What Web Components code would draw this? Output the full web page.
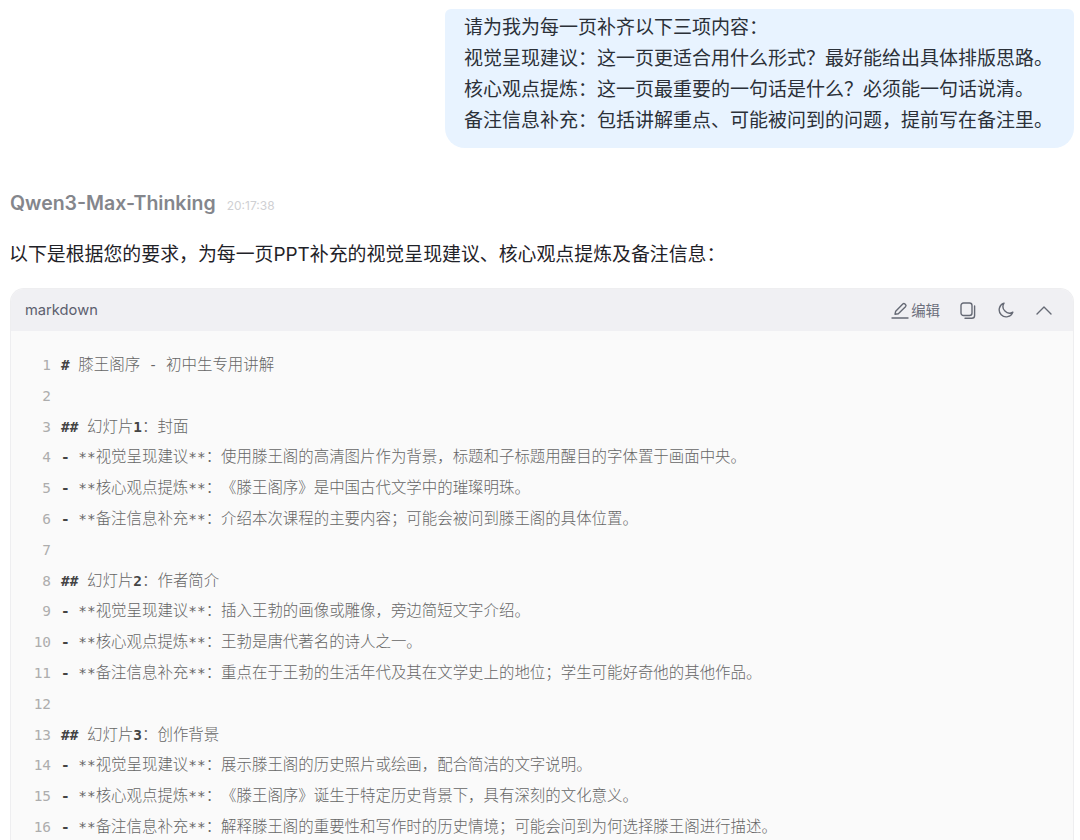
<!DOCTYPE html>
<html lang="zh">
<head>
<meta charset="utf-8">
<style>
html,body{margin:0;padding:0;background:#fff;height:840px;overflow:hidden}
body{font-family:"Inter","Noto Sans CJK SC",sans-serif}
</style>
</head>
<body>
<chat-page>
  <user-bubble>
    <div>请为我为每一页补齐以下三项内容：</div>
    <div>视觉呈现建议：这一页更适合用什么形式？最好能给出具体排版思路。</div>
    <div>核心观点提炼：这一页最重要的一句话是什么？必须能一句话说清。</div>
    <div>备注信息补充：包括讲解重点、可能被问到的问题，提前写在备注里。</div>
  </user-bubble>
  <model-meta name="Qwen3-Max-Thinking" time="20:17:38"></model-meta>
  <reply-text>以下是根据您的要求，为每一页PPT补充的视觉呈现建议、核心观点提炼及备注信息：</reply-text>
  <code-card lang="markdown">
    <code-line n="1" kind="h"># |膝王阁序 - 初中生专用讲解</code-line>
    <code-line n="2"></code-line>
    <code-line n="3" kind="h">## |幻灯片1：封面</code-line>
    <code-line n="4" kind="li">- |**视觉呈现建议**：使用滕王阁的高清图片作为背景，标题和子标题用醒目的字体置于画面中央。</code-line>
    <code-line n="5" kind="li">- |**核心观点提炼**：《滕王阁序》是中国古代文学中的璀璨明珠。</code-line>
    <code-line n="6" kind="li">- |**备注信息补充**：介绍本次课程的主要内容；可能会被问到滕王阁的具体位置。</code-line>
    <code-line n="7"></code-line>
    <code-line n="8" kind="h">## |幻灯片2：作者简介</code-line>
    <code-line n="9" kind="li">- |**视觉呈现建议**：插入王勃的画像或雕像，旁边简短文字介绍。</code-line>
    <code-line n="10" kind="li">- |**核心观点提炼**：王勃是唐代著名的诗人之一。</code-line>
    <code-line n="11" kind="li">- |**备注信息补充**：重点在于王勃的生活年代及其在文学史上的地位；学生可能好奇他的其他作品。</code-line>
    <code-line n="12"></code-line>
    <code-line n="13" kind="h">## |幻灯片3：创作背景</code-line>
    <code-line n="14" kind="li">- |**视觉呈现建议**：展示滕王阁的历史照片或绘画，配合简洁的文字说明。</code-line>
    <code-line n="15" kind="li">- |**核心观点提炼**：《滕王阁序》诞生于特定历史背景下，具有深刻的文化意义。</code-line>
    <code-line n="16" kind="li">- |**备注信息补充**：解释滕王阁的重要性和写作时的历史情境；可能会问到为何选择滕王阁进行描述。</code-line>
  </code-card>
</chat-page>
<script>
// small helper, every element gets its own open shadow root
function shadow(el, html){
  el.attachShadow({mode:'open'});
  el.shadowRoot.innerHTML = html;
}
const CJK = '"Noto Sans CJK SC"';
const MONO = '"DejaVu Sans Mono",' + CJK + ',monospace';

class ChatPage extends HTMLElement {
  connectedCallback(){
    shadow(this, `<style>
      :host{display:flex;flex-direction:column;padding:9px 6px 0 10px;height:831px;overflow:hidden;box-sizing:content-box;text-spacing-trim:space-all}
    </style><slot></slot>`);
  }
}

class UserBubble extends HTMLElement {
  connectedCallback(){
    shadow(this, `<style>
      :host{display:block;align-self:flex-end;width:610px;padding:3px 0 12px 19px;background:#e8f3ff;
        border-radius:6px 6px 20px 20px;color:#2b3038;font:19px/31px "Inter",${CJK},sans-serif}
    </style><slot></slot>`);
  }
}

class ModelMeta extends HTMLElement {
  connectedCallback(){
    shadow(this, `<style>
      :host{display:flex;align-items:baseline;gap:11px;margin-top:41px;height:28px}
      .name{font:600 19.5px/28px "Inter",sans-serif;color:#84868c}
      .time{font:12px/28px "Inter",sans-serif;color:#cfd0d3}
    </style><span class="name">${this.getAttribute('name')}</span><span class="time">${this.getAttribute('time')}</span>`);
  }
}

class ReplyText extends HTMLElement {
  connectedCallback(){
    shadow(this, `<style>
      :host{display:block;margin:22px 0 0 -1px;color:#1f2228;font:18.9px/31px "Inter",${CJK},sans-serif}
    </style><slot></slot>`);
  }
}

class CodeCard extends HTMLElement {
  connectedCallback(){
    shadow(this, `<style>
      :host{display:block;margin-top:18px;border-radius:14px 14px 0 0;border:1px solid #eeeef0;border-bottom:0;background:#fafafa;overflow:hidden;height:560px;flex:none}
      header{display:flex;align-items:center;height:42px;background:#f0f0f3;padding:0 21px 0 14px;color:#5c5f6e;font:14.7px/42px "Inter",sans-serif}
      .lang{flex:1}
      .tools{display:flex;align-items:center}
      .edit{display:flex;align-items:center;gap:1px;font:14.4px/20px ${CJK},sans-serif;color:#6c6f7c;margin-right:20px}
      .edit svg{margin-left:-2px;margin-right:1px}
      svg{display:block;fill:none;stroke:#666a75;stroke-width:1.4;stroke-linecap:round;stroke-linejoin:round}
      .copy{margin-right:22px}
      .moon{margin-right:22px}
      main{padding:19px 0 0}
    </style>
    <header>
      <span class="lang">${this.getAttribute('lang')}</span>
      <div class="tools">
        <span class="edit"><svg width="18" height="18" viewBox="0 0 18 18"><path d="M4 13.2l.7-3L11.8 3a1.5 1.5 0 0 1 2.1 0l.6.6a1.5 1.5 0 0 1 0 2.1L7.3 12.7z"/><path d="M1 17h16"/></svg>编辑</span>
        <svg class="copy" width="16" height="17" viewBox="0 0 16 17"><rect x="1" y="1" width="11" height="12.5" rx="2.5"/><path d="M14.6 4v9.5a2.8 2.8 0 0 1-2.8 2.8H5"/></svg>
        <svg class="moon" width="16" height="16" viewBox="0 0 16 16"><path d="M6 1.2a7 7 0 1 0 8.8 9A6.5 6.5 0 0 1 6 1.2z"/></svg>
        <svg width="16" height="9" viewBox="0 0 16 9"><path d="M1 8l7-7 7 7"/></svg>
      </div>
    </header>
    <main><slot></slot></main>`);
  }
}

class CodeLine extends HTMLElement {
  connectedCallback(){
    const kind = this.getAttribute('kind');
    const raw = this.textContent;
    const bar = raw.indexOf('|');
    const mark = raw.slice(0, bar).trim();
    let body = raw.slice(bar + 1);
    // digits in heading lines are bold and darker
    if (kind === 'h') body = body.replace(/\d/g, d => `<b>${d}</b>`);
    // cjk runs are a bit larger than the mono latin in the reference
    body = body.replace(/[\u3000-\u303f\u4e00-\u9fff\uff00-\uffef]+/g, s => `<span class="c">${s}</span>`);
    shadow(this, `<style>
      :host{display:flex;height:30.8px;font:14.4px/30.8px ${MONO};color:#666;white-space:pre}
      .n{width:40px;text-align:right;color:#adadad;flex:none}
      .t{margin-left:10px}
      .c{font-size:15.45px;font-weight:300;line-height:1}
      .m,b{color:#444;font-weight:700}
    </style><span class="n">${this.getAttribute('n')}</span><span class="t">${mark ? `<span class="m">${mark} </span>` : ''}${body}</span>`);
  }
}

customElements.define('chat-page', ChatPage);
customElements.define('user-bubble', UserBubble);
customElements.define('model-meta', ModelMeta);
customElements.define('reply-text', ReplyText);
customElements.define('code-card', CodeCard);
customElements.define('code-line', CodeLine);
</script>
</body>
</html>
